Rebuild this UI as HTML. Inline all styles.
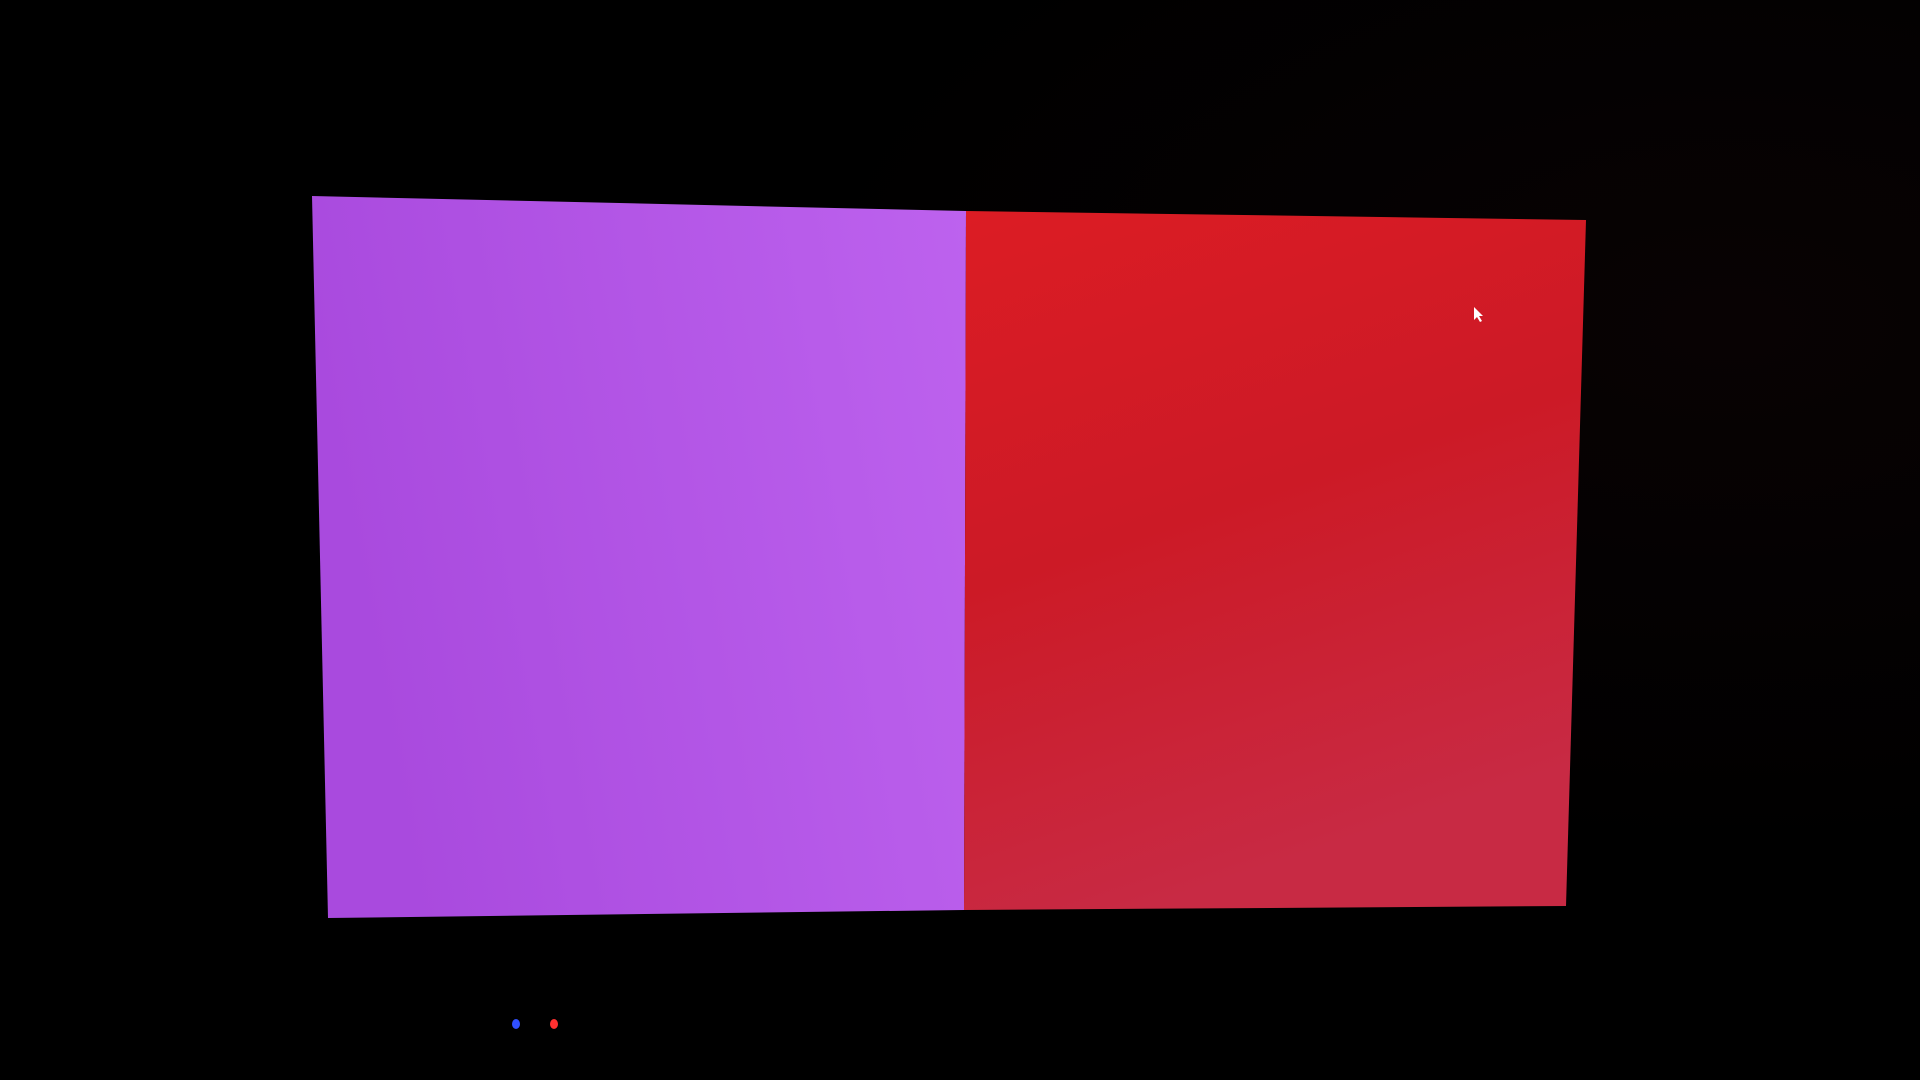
<!DOCTYPE html>
<html><head><meta charset="utf-8"><style>html,body{margin:0;padding:0;background:#000;width:1920px;height:1080px;overflow:hidden}</style></head>
<body>
<svg width="1920" height="1080" viewBox="0 0 1920 1080" xmlns="http://www.w3.org/2000/svg">
<defs>
<linearGradient id="p" x1="0" y1="0.2" x2="1" y2="0">
<stop offset="0" stop-color="#a94ade"/><stop offset="1" stop-color="#bd62ee"/></linearGradient>
<linearGradient id="r" x1="0" y1="0" x2="0.3" y2="1">
<stop offset="0" stop-color="#dc1c24"/><stop offset="0.5" stop-color="#cc1a26"/><stop offset="1" stop-color="#c82a44"/></linearGradient>
<radialGradient id="bg" cx="0.9" cy="0.3" r="0.5"><stop offset="0" stop-color="#080203"/><stop offset="1" stop-color="#000"/></radialGradient>
</defs>
<rect width="1920" height="1080" fill="url(#bg)"/>
<polygon points="312,196 966,211 964,910 328,918" fill="url(#p)"/>
<polygon points="966,211 1586,220 1566,906 964,910" fill="url(#r)"/>
<ellipse cx="516" cy="1024" rx="4" ry="5" fill="#3050ff"/>
<ellipse cx="554" cy="1024" rx="4" ry="5" fill="#ff3030"/>
<polygon points="1474,307 1474,320 1477,317 1480,322 1482,321 1479,316 1483,316" fill="#fff"/>
</svg>
</body></html>
